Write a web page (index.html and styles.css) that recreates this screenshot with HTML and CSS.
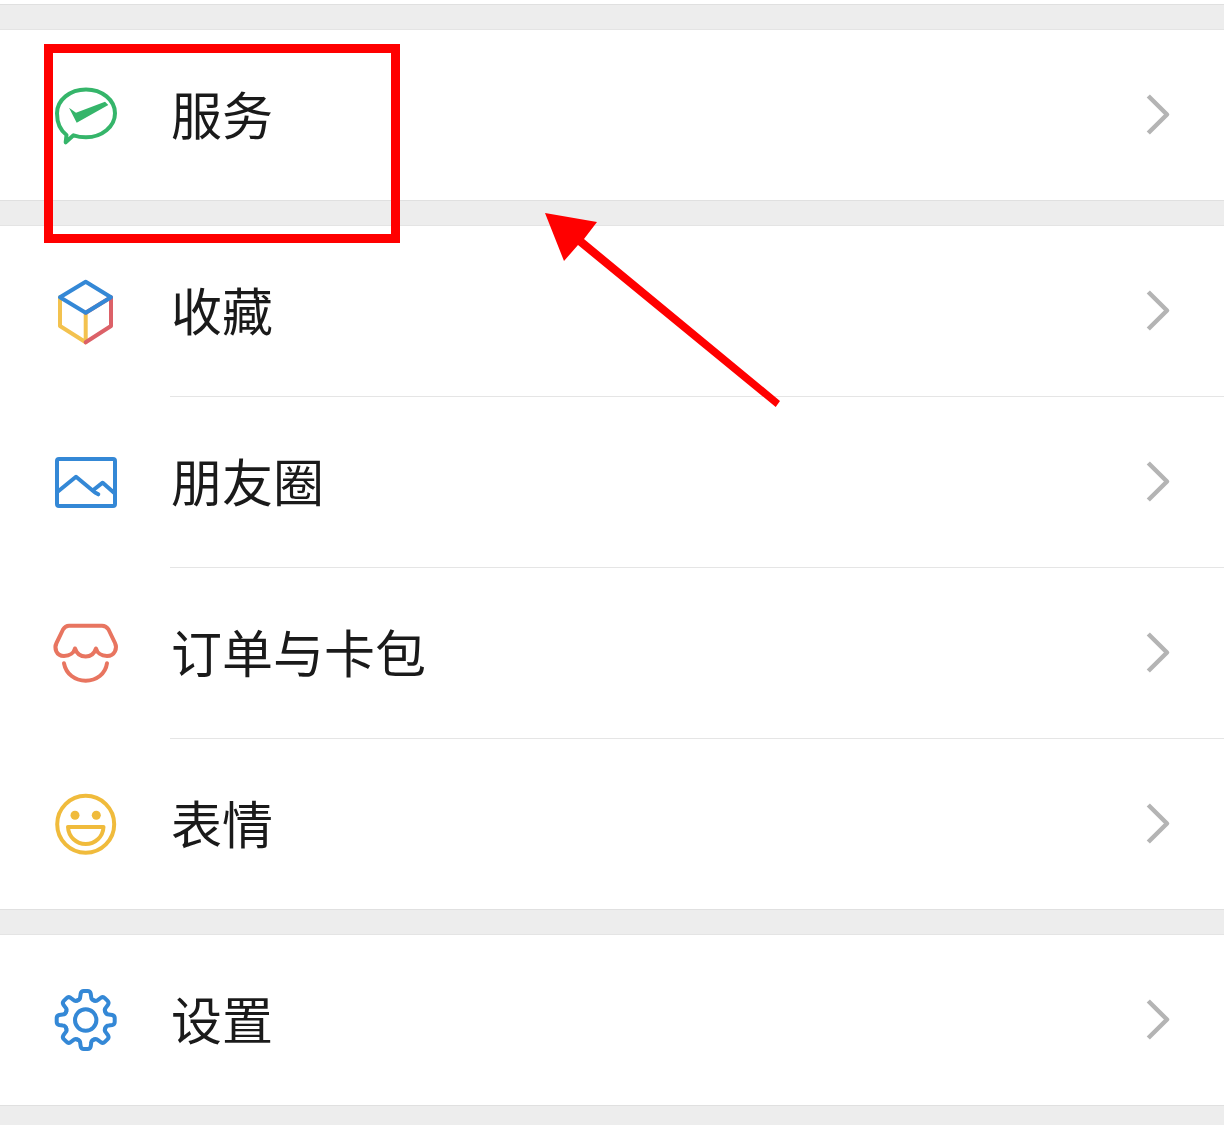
FILE: index.html
```html
<!DOCTYPE html>
<html lang="zh-CN">
<head>
    <meta charset="UTF-8">
    <meta name="viewport" content="width=device-width, initial-scale=1.0">
    <title>我</title>
    <link rel="stylesheet" href="styles.css">
</head>
<body>
    <div class="page">
        <div class="gap"></div>

        <div class="row">
            <svg class="icon" viewBox="0 0 70 70">
                <path class="line green" d="M15.700 62.300L16.500 55C10.500 50.500 7 43 7 33.300 7 20 20 9.500 36 9.500S65 20 65 33.300 52 57.300 36 57.300C31.500 57.300 27 56.500 23.500 55.300Z"/>
                <path class="fill-green" d="M19 27.700L26 32.700 55 21.700 58.300 25 26.700 42.700Z"/>
            </svg>
            <div class="row-body">
                <span class="label">服务</span>
                <svg class="chevron" viewBox="0 0 30 50"><path d="M5.300 6L24 24.500 5.300 43"/></svg>
            </div>
        </div>

        <div class="gap"></div>

        <div class="row">
            <svg class="icon" viewBox="0 0 70 70">
                <path class="line yellow" d="M10 21.300V50L35.700 66.300V36.700"/>
                <path class="line red" d="M35.700 66.300L61 50V21.300L35.700 36.700"/>
                <path class="line blue" d="M35.700 36.700L10 21.300 35.700 5.700 61 21.300Z"/>
            </svg>
            <div class="row-body divided">
                <span class="label">收藏</span>
                <svg class="chevron" viewBox="0 0 30 50"><path d="M5.300 6L24 24.500 5.300 43"/></svg>
            </div>
        </div>

        <div class="row">
            <svg class="icon" viewBox="0 0 70 70">
                <rect class="line blue" x="7" y="12" width="58" height="47" rx="2"/>
                <path class="line blue" d="M7 45.300L26 29.700 45 45.500 48.300 47.300M43.300 43L52.700 35.700 64 45.700"/>
            </svg>
            <div class="row-body divided">
                <span class="label">朋友圈</span>
                <svg class="chevron" viewBox="0 0 30 50"><path d="M5.300 6L24 24.500 5.300 43"/></svg>
            </div>
        </div>

        <div class="row">
            <svg class="icon" viewBox="0 0 70 70">
                <path class="line orange" d="M19 7.700H52C55 7.700 57 9 58.500 11.500L65 25C67.500 30 65 38 57 38 51 38 47 34.500 46 30.500 44.500 35 41 38.500 35.700 38.500 30 38.500 26.500 35 25 30.500 24 34.500 20 38 14 38 6 38 4 30 6.500 25L13 11.500C14.500 9 16 7.700 19 7.700Z"/>
                <path class="line orange" d="M14 45.300C16 56 25 62.700 35.700 62.700S55.500 56 57 45.300"/>
            </svg>
            <div class="row-body divided">
                <span class="label">订单与卡包</span>
                <svg class="chevron" viewBox="0 0 30 50"><path d="M5.300 6L24 24.500 5.300 43"/></svg>
            </div>
        </div>

        <div class="row">
            <svg class="icon" viewBox="0 0 70 70">
                <circle class="line smile" cx="35.700" cy="35.300" r="28.500"/>
                <circle class="fill-smile" cx="25" cy="26.300" r="4.500"/>
                <circle class="fill-smile" cx="46.300" cy="26.300" r="4.500"/>
                <path class="line smile" d="M18 38H53.500C53 48 45 55 35.700 55S18.500 48 18 38Z"/>
            </svg>
            <div class="row-body">
                <span class="label">表情</span>
                <svg class="chevron" viewBox="0 0 30 50"><path d="M5.300 6L24 24.500 5.300 43"/></svg>
            </div>
        </div>

        <div class="gap"></div>

        <div class="row">
            <svg class="icon" viewBox="0 0 70 70">
                <defs>
                    <path id="tooth" d="M-8.500-19.500C-6.500-20-5.500-21-5.500-23L-5-26.500C-4.500-28.500-3.500-29-2-29H2C3.500-29 4.500-28.500 5-26.500L5.500-23C5.500-21 6.500-20 8.500-19.500"/>
                </defs>
                <g class="line blue" transform="translate(35.700 35)">
                    <use href="#tooth"/>
                    <use href="#tooth" transform="rotate(45)"/>
                    <use href="#tooth" transform="rotate(90)"/>
                    <use href="#tooth" transform="rotate(135)"/>
                    <use href="#tooth" transform="rotate(180)"/>
                    <use href="#tooth" transform="rotate(225)"/>
                    <use href="#tooth" transform="rotate(270)"/>
                    <use href="#tooth" transform="rotate(315)"/>
                    <circle r="10.700"/>
                </g>
            </svg>
            <div class="row-body">
                <span class="label">设置</span>
                <svg class="chevron" viewBox="0 0 30 50"><path d="M5.300 6L24 24.500 5.300 43"/></svg>
            </div>
        </div>

        <div class="gap gap-last"></div>

        <!-- annotation drawn on top of the screenshot -->
        <div class="mark-box"></div>
        <svg class="mark-arrow" viewBox="0 0 245 205">
            <polygon points="5,8 57,17 44,34 240,196 235.700,202 38,40 24,56"/>
        </svg>
    </div>
</body>
</html>
```

FILE: styles.css
```css
* {
    margin: 0;
    padding: 0;
    box-sizing: border-box;
}

html,
body {
    background-color: #ffffff;
}

.page {
    position: relative;
    height: 1125px;
    padding-top: 4px;
    overflow: hidden;
    font-family: "Noto Sans CJK SC", "Noto Sans", sans-serif;
    color: #1a1a1a;
}

.gap {
    height: 26px;
    background-color: #ededed;
    border-top: 1px solid #e0e0e0;
    border-bottom: 1px solid #e4e4e4;
}

.gap-last {
    height: 20px;
    border-bottom: none;
}

.row {
    display: flex;
    padding-left: 50px;
}

.icon {
    flex: none;
    width: 70px;
    height: 70px;
    margin-top: 50px;
    margin-right: 50px;
}

.row-body {
    flex: 1;
    display: flex;
    justify-content: space-between;
    align-items: center;
    height: 170px;
    padding-right: 51px;
}

.row-body.divided {
    height: 171px;
    border-bottom: 1px solid #e5e5e5;
}

.label {
    margin-left: 1px;
    padding-bottom: 4px;
    font-size: 51px;
    line-height: 1;
}

.chevron {
    width: 30px;
    height: 50px;
    fill: none;
    stroke: #b4b4b4;
    stroke-width: 4.500;
    stroke-linejoin: round;
}

.line {
    fill: none;
    stroke-width: 4;
    stroke-linecap: round;
    stroke-linejoin: round;
}

.green { stroke: #35b56a; }
.blue { stroke: #3488d6; }
.yellow { stroke: #f3c24f; }
.red { stroke: #dc6168; }
.orange { stroke: #e87560; }
.smile { stroke: #f0bb3c; }

.fill-green { fill: #35b56a; }
.fill-smile { fill: #f0bb3c; }

.mark-box {
    position: absolute;
    left: 44px;
    top: 44px;
    width: 356px;
    height: 199px;
    border: 9px solid #ff0000;
}

.mark-arrow {
    position: absolute;
    left: 540px;
    top: 205px;
    width: 245px;
    height: 205px;
    fill: #ff0000;
}
```
